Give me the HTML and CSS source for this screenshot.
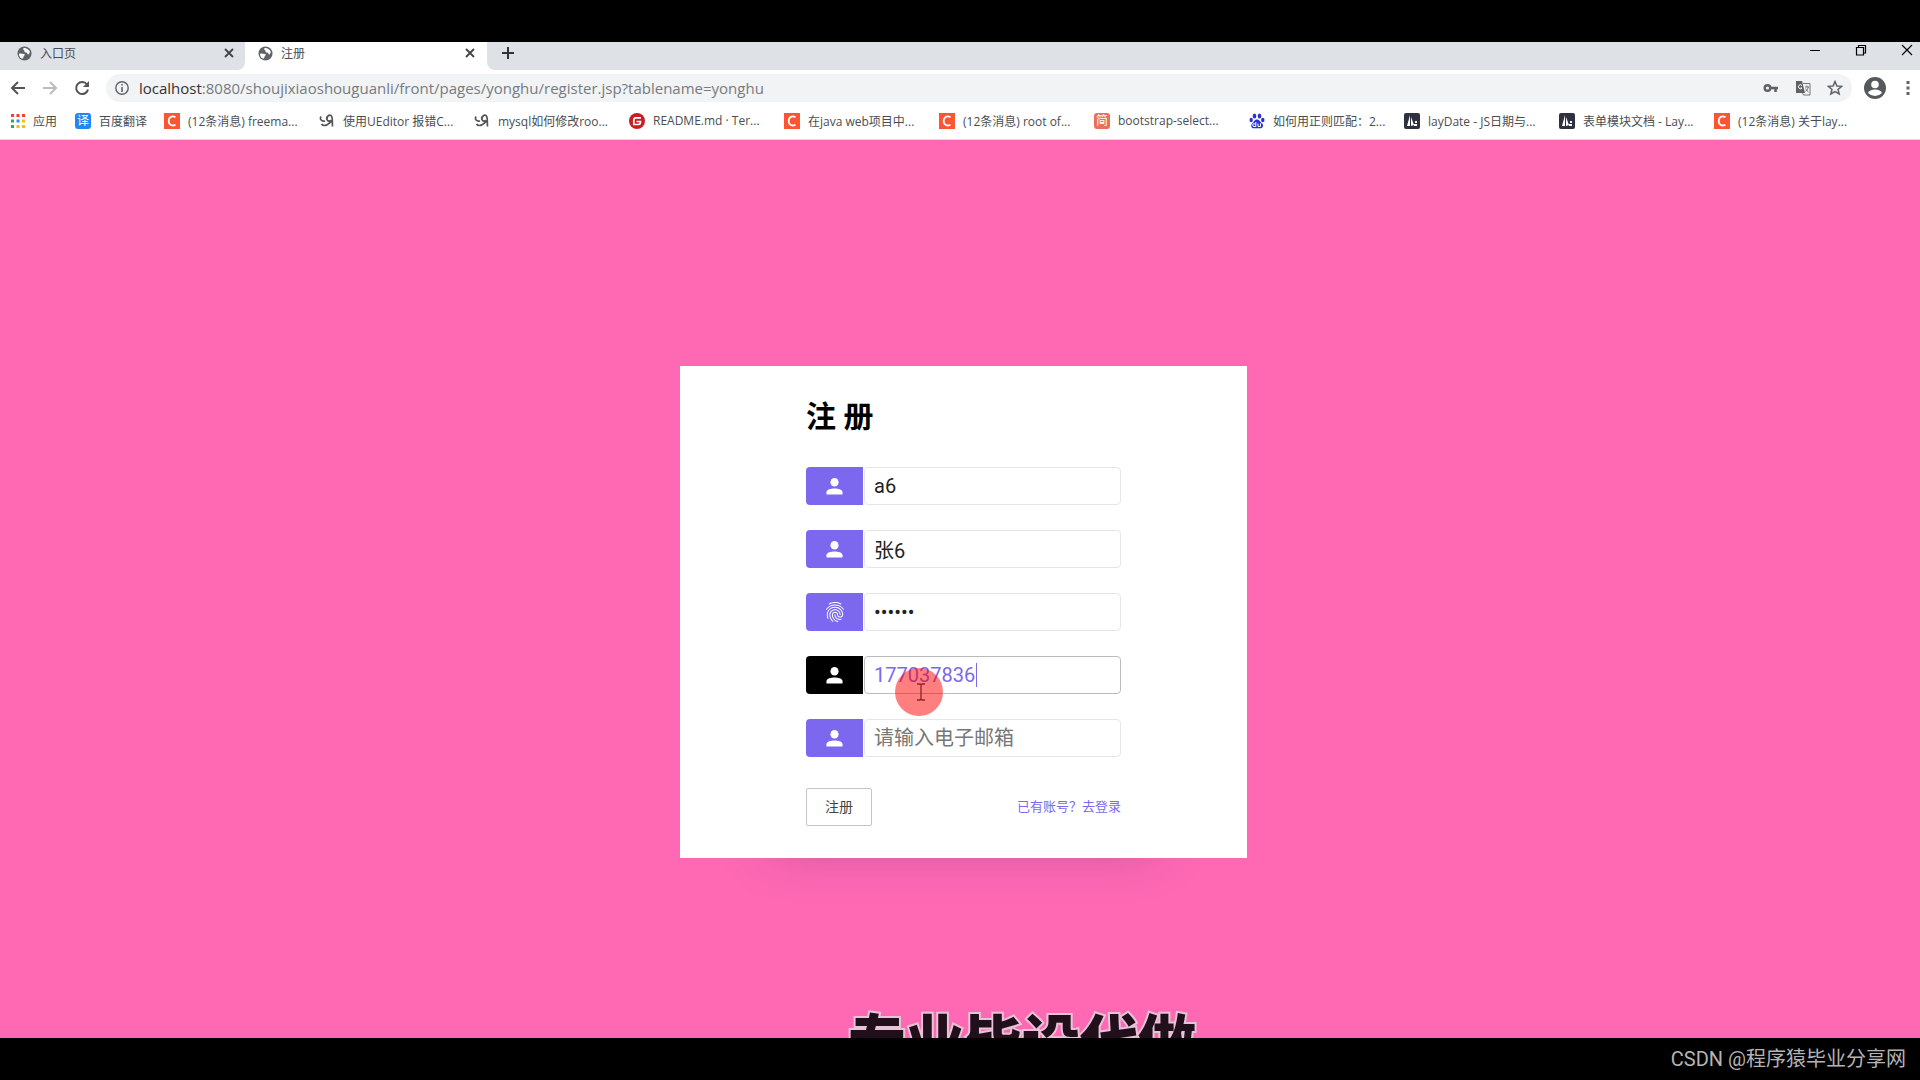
FILE: index.html
```html
<!DOCTYPE html>
<html lang="zh-CN">
<head>
  <meta charset="UTF-8" />
  <meta name="viewport" content="width=device-width, initial-scale=1" />
  <title>注册</title>
  <link rel="stylesheet" href="styles.css">
</head>
<body>
  <svg class="defs" width="0" height="0" aria-hidden="true">
    <symbol id="globe" viewBox="0 0 16 16">
      <circle cx="8" cy="8" r="7.5" fill="#5f6368"/>
      <path d="M2 8.500C4 7 6 9 8 8.500C9 9.500 7 10.500 7 11.500S6 13.500 5.500 13.700C3.500 12.800 2.200 11 2 8.500ZM8 2C10 2 12.500 3.500 13.500 5.500C13.800 7 13 8.500 12 9C10.500 9 11.500 7.500 10 7S8 7 8 5.500S6.500 4.500 6.500 3.500S7.300 2 8 2Z" fill="#fff"/>
    </symbol>
    <symbol id="person" viewBox="0 0 18 18">
      <ellipse cx="9" cy="4.500" rx="4.300" ry="4.500" fill="#fff"/>
      <path d="M0.500 17.500V15C0.500 12 5.500 11 9 11S17.500 12 17.500 15V17.500Z" fill="#fff"/>
    </symbol>
    <symbol id="csdn" viewBox="0 0 16 16">
      <path d="M0 0H16V16H0Z" fill="#fc5531"/>
      <path d="M11.500 4.200C8 2.200 4.700 4 4.700 8S8 13.500 11.500 11.700" fill="none" stroke="#fff" stroke-width="1.800"/>
    </symbol>
    <symbol id="ninja" viewBox="0 0 16 16">
      <path d="M2 3.500C0.500 6 2.500 9 6 8M8 3.500C7 7 9 9 12 7.500M8 6C8 3 10 1.500 12 2.500C14 4 13 8 13.500 13.500M13 7.500C11 9.500 9 12.500 5.500 12.500C4 12.500 3 11.800 2.500 11" fill="none" stroke="#555" stroke-width="1.700"/>
    </symbol>
    <symbol id="layui" viewBox="0 0 16 16">
      <rect width="16" height="16" rx="2" fill="#2f3140"/>
      <path d="M3 13L6 2V13ZM7 13V4L10 12ZM11 8H13V10H11ZM10 11H13V13H10Z" fill="#fff"/>
    </symbol>
  </svg>

  <header class="browser">
    <div class="tabs">
      <div class="tab">
        <svg class="favicon"><use href="#globe"/></svg>
        <span>入口页</span>
        <button class="icon-btn" aria-label="关闭"><svg width="10" height="10" viewBox="0 0 10 10"><path d="M1 1L9 9M9 1L1 9" stroke="#444" stroke-width="1.800"/></svg></button>
      </div>
      <div class="tab active">
        <svg class="favicon"><use href="#globe"/></svg>
        <span>注册</span>
        <button class="icon-btn" aria-label="关闭"><svg width="10" height="10" viewBox="0 0 10 10"><path d="M1 1L9 9M9 1L1 9" stroke="#444" stroke-width="1.800"/></svg></button>
      </div>
      <div class="tab-rest">
        <button class="icon-btn" aria-label="新标签页"><svg width="14" height="14" viewBox="0 0 14 14"><path d="M7 1V13M1 7H13" stroke="#333" stroke-width="2"/></svg></button>
        <div class="window-btns">
          <button class="icon-btn" aria-label="最小化"><svg width="12" height="12" viewBox="0 0 12 12"><path d="M1 6.500H11" stroke="#000"/></svg></button>
          <button class="icon-btn" aria-label="还原"><svg width="12" height="12" viewBox="0 0 12 12"><path d="M1.500 3.500H8.500V11H1.500ZM3.500 3.500V1.500H10.500V9H8.500" fill="none" stroke="#000" stroke-width="1.200"/></svg></button>
          <button class="icon-btn" aria-label="关闭窗口"><svg width="12" height="12" viewBox="0 0 12 12"><path d="M1 1L11 11M11 1L1 11" stroke="#000" stroke-width="1.200"/></svg></button>
        </div>
      </div>
    </div>

    <div class="toolbar">
      <button class="icon-btn" aria-label="后退"><svg width="16" height="16" viewBox="0 0 16 16"><path d="M15 8H2M8 2L2 8L8 14" fill="none" stroke="#555" stroke-width="2"/></svg></button>
      <button class="icon-btn" aria-label="前进"><svg width="16" height="16" viewBox="0 0 16 16"><path d="M1 8H14M8 2L14 8L8 14" fill="none" stroke="#bbb" stroke-width="2"/></svg></button>
      <button class="icon-btn" aria-label="刷新"><svg width="16" height="16" viewBox="0 0 16 16"><path d="M13 4.500A6 6 0 1 0 14 9.500" fill="none" stroke="#555" stroke-width="2"/><path d="M15 1V7H9Z" fill="#555"/></svg></button>
      <div class="address">
        <svg width="14" height="14" viewBox="0 0 14 14"><circle cx="7" cy="7" r="6.200" fill="none" stroke="#5f6368" stroke-width="1.400"/><path d="M7 6V11M7 3V4.600" stroke="#5f6368" stroke-width="1.600"/></svg>
        <div class="url"><span>localhost</span>:8080/shoujixiaoshouguanli/front/pages/yonghu/register.jsp?tablename=yonghu</div>
        <button class="icon-btn" aria-label="密码"><svg width="16" height="16" viewBox="0 0 16 16"><circle cx="4.500" cy="8" r="2.800" fill="none" stroke="#5f6368" stroke-width="2.400"/><path d="M7 8H15M12.500 8V12" fill="none" stroke="#5f6368" stroke-width="2.600"/></svg></button>
        <button class="icon-btn" aria-label="翻译"><svg width="16" height="16" viewBox="0 0 16 16"><path d="M1 1H7L10 13H1Z" fill="#5f6368"/><path d="M8 3.500H15V15H8.500L7.500 13" fill="none" stroke="#777"/><path d="M7 5.500A2 2 0 1 0 7 8H5.500" fill="none" stroke="#fff"/><path d="M10 7H14M12 5.500V7M13.500 7Q12.500 10 10.500 11.500M10.500 8.500Q12 11 13.500 12" fill="none" stroke="#777"/></svg></button>
        <button class="icon-btn" aria-label="收藏"><svg width="16" height="16" viewBox="0 0 16 16"><path d="M8 1.500L9.900 6 14.700 6.300 11 9.400 12.200 14 8 11.500 3.800 14 5 9.400 1.300 6.300 6.100 6Z" fill="none" stroke="#5f6368" stroke-width="1.500"/></svg></button>
      </div>
      <button class="icon-btn avatar" aria-label="用户"><svg width="22" height="22" viewBox="0 0 22 22"><circle cx="11" cy="11" r="11" fill="#55585d"/><circle cx="11" cy="7.500" r="3.800" fill="#fff"/><path d="M4 16Q5.500 12.500 11 12.500T18 16Q15 19 11 19T4 16Z" fill="#fff"/></svg></button>
      <button class="icon-btn" aria-label="菜单"><svg width="4" height="14" viewBox="0 0 4 14"><path d="M0.500 0H3.500V3H0.500ZM0.500 5.500H3.500V8.500H0.500ZM0.500 11H3.500V14H0.500Z" fill="#5f6368"/></svg></button>
    </div>

    <nav class="bookmarks">
      <a class="apps" href="#"><svg width="14" height="14" viewBox="0 0 14 14"><path d="M0 0H3V3H0ZM5.500 0H8.500V3H5.500ZM11 0H14V3H11Z" fill="#ea4335"/><path d="M0 5.500H3V8.500H0ZM0 11H3V14H0Z" fill="#34a853"/><path d="M5.500 5.500H8.500V8.500H5.500Z" fill="#4285f4"/><path d="M11 5.500H14V8.500H11ZM5.500 11H8.500V14H5.500ZM11 11H14V14H11Z" fill="#fbbc05"/></svg>应用</a>
      <a class="fanyi" href="#"><span class="mark mark-blue">译</span>百度翻译</a>
      <a href="#"><svg><use href="#csdn"/></svg>(12条消息) freema...</a>
      <a href="#"><svg><use href="#ninja"/></svg>使用UEditor 报错C...</a>
      <a href="#"><svg><use href="#ninja"/></svg>mysql如何修改roo...</a>
      <a href="#"><svg viewBox="0 0 16 16"><circle cx="8" cy="8" r="8" fill="#c71d23"/><path d="M12 4.800H7Q4.800 4.800 4.800 7V11.500H9.500Q11.500 11.500 11.500 8.500H7.500" fill="none" stroke="#fff" stroke-width="1.700"/></svg>README.md · Ter...</a>
      <a href="#"><svg><use href="#csdn"/></svg>在java web项目中...</a>
      <a href="#"><svg><use href="#csdn"/></svg>(12条消息) root of...</a>
      <a href="#"><span class="mark mark-red">简</span>bootstrap-select...</a>
      <a href="#"><svg viewBox="0 0 16 16"><g fill="#2b32d8"><ellipse cx="5.500" cy="3" rx="1.800" ry="2.500"/><ellipse cx="10.500" cy="3" rx="1.800" ry="2.500"/><ellipse cx="2.200" cy="7" rx="1.700" ry="2.200"/><ellipse cx="13.800" cy="7" rx="1.700" ry="2.200"/><path d="M8 6.500C10.500 6.500 11 9 13 10.500S14 15.500 11 15.300H5C2 15.500 1.500 12 3.200 10.500S5.500 6.500 8 6.500Z"/></g><path d="M6.800 9V13.500H5A1.300 1.300 0 0 1 5 10.800H6.800M9 10.500V13.500H11.500V10.500" fill="none" stroke="#fff"/></svg>如何用正则匹配：2...</a>
      <a href="#"><svg><use href="#layui"/></svg>layDate - JS日期与...</a>
      <a href="#"><svg><use href="#layui"/></svg>表单模块文档 - Lay...</a>
      <a href="#"><svg><use href="#csdn"/></svg>(12条消息) 关于lay...</a>
    </nav>
  </header>

  <main class="page">
    <form class="card">
      <h1>注 册</h1>
      <div class="field">
        <label for="account"><svg class="person"><use href="#person"/></svg></label>
        <input type="text" id="account" value="a6" aria-label="账号" />
      </div>
      <div class="field">
        <label for="fullname"><svg class="person"><use href="#person"/></svg></label>
        <input type="text" id="fullname" value="张6" aria-label="姓名" />
      </div>
      <div class="field">
        <label for="password"><svg class="finger" viewBox="2 2 20 20"><path fill="#fff" d="M17.810 4.470c-.08 0-.16-.02-.23-.06C15.660 3.420 14 3 12.010 3c-1.980 0-3.860.47-5.570 1.410-.24.13-.54.04-.68-.2-.13-.24-.04-.55.2-.68C7.820 2.520 9.860 2 12.010 2c2.130 0 3.990.47 6.030 1.520.25.13.34.43.21.67-.09.18-.26.28-.44.28zM3.500 9.720c-.1 0-.2-.03-.29-.09-.23-.16-.28-.47-.12-.7.99-1.400 2.250-2.500 3.750-3.270C9.980 4.040 14 4.030 17.150 5.650c1.500.77 2.760 1.860 3.750 3.250.16.22.11.54-.12.7-.23.16-.54.11-.7-.12-.9-1.260-2.040-2.250-3.390-2.940-2.870-1.470-6.540-1.470-9.400.01-1.360.7-2.500 1.700-3.400 2.960-.08.14-.23.21-.39.21zm6.250 12.070c-.13 0-.26-.05-.35-.15-.87-.87-1.340-1.430-2.010-2.640-.69-1.230-1.050-2.730-1.050-4.340 0-2.970 2.540-5.390 5.660-5.390s5.660 2.420 5.660 5.390c0 .28-.22.5-.5.5s-.5-.22-.5-.5c0-2.420-2.090-4.390-4.660-4.390-2.570 0-4.660 1.970-4.660 4.390 0 1.440.32 2.770.93 3.850.64 1.150 1.080 1.640 1.850 2.420.19.2.19.51 0 .71-.11.1-.24.15-.37.15zm7.170-1.850c-1.190 0-2.240-.3-3.100-.89-1.490-1.010-2.380-2.650-2.380-4.390 0-.28.22-.5.5-.5s.5.22.5.5c0 1.410.72 2.740 1.940 3.560.71.48 1.540.71 2.540.71.24 0 .64-.03 1.040-.1.27-.05.53.13.58.41.05.27-.13.53-.41.58-.57.11-1.070.12-1.210.12zM14.910 22c-.04 0-.09-.01-.13-.02-1.590-.44-2.630-1.030-3.720-2.100-1.400-1.390-2.170-3.240-2.170-5.220 0-1.620 1.380-2.940 3.080-2.940 1.700 0 3.080 1.320 3.080 2.940 0 1.070.93 1.940 2.080 1.940s2.080-.87 2.080-1.940c0-3.770-3.250-6.830-7.250-6.830-2.840 0-5.440 1.580-6.610 4.030-.39.81-.59 1.760-.59 2.800 0 .78.07 2.010.67 3.610.1.26-.03.55-.29.64-.26.1-.55-.04-.64-.29-.49-1.310-.73-2.610-.73-3.960 0-1.200.23-2.290.68-3.240 1.330-2.790 4.280-4.600 7.510-4.600 4.550 0 8.250 3.510 8.250 7.830 0 1.620-1.380 2.940-3.080 2.940s-3.080-1.320-3.080-2.940c0-1.070-.93-1.940-2.080-1.940s-2.080.87-2.080 1.940c0 1.710.66 3.310 1.870 4.510.95.94 1.860 1.460 3.270 1.850.27.07.42.35.35.61-.05.23-.26.38-.47.38z"/></svg></label>
        <input type="password" id="password" value="123456" aria-label="密码" />
      </div>
      <div class="field current">
        <label for="phone"><svg class="person"><use href="#person"/></svg></label>
        <input type="text" id="phone" value="177037836" aria-label="手机" />
        <span class="caret"></span>
        <span class="pointer"><svg width="10" height="18" viewBox="0 0 10 18"><path d="M1 1H4L5 2L6 1H9M5 2V16M1 17H4L5 16L6 17H9" fill="none" stroke="#8c2626" stroke-width="1.300"/></svg></span>
      </div>
      <div class="field">
        <label for="email"><svg class="person"><use href="#person"/></svg></label>
        <input type="text" id="email" placeholder="请输入电子邮箱" aria-label="电子邮箱" />
      </div>
      <div class="actions">
        <button type="submit">注册</button>
        <a href="#">已有账号？去登录</a>
      </div>
    </form>
    <p class="caption">专业毕设代做</p>
  </main>

  <footer class="watermark">CSDN @程序猿毕业分享网</footer>
</body>
</html>
```

FILE: styles.css
```css
* {
  box-sizing: border-box;
}
body {
  margin: 0;
  padding-top: 42px;
  min-height: 100vh;
  display: flex;
  flex-direction: column;
  background: #000;
  font-family: "Open Sans", "Noto Sans CJK SC", sans-serif;
}
.defs {
  position: absolute;
}
.icon-btn {
  display: flex;
  padding: 0;
  border: none;
  background: none;
  cursor: pointer;
}

/* tabs */
.browser {
  background: #fff;
  color: #4a4d51;
  font-size: 12px;
}
.tabs {
  display: flex;
  height: 28px;
}
.tab {
  flex: 0 0 245px;
  display: flex;
  align-items: center;
  gap: 8px;
  padding: 0 11px 6px 17px;
  background: #dee1e6;
  border-radius: 0 0 8px 0;
}
.tab.active {
  flex-basis: 242px;
  padding: 0 12px 6px 13px;
  background: #fff;
}
.tab span {
  flex: 1;
}
.favicon {
  width: 15px;
  height: 15px;
}
.tab-rest {
  flex: 1;
  display: flex;
  justify-content: space-between;
  align-items: center;
  padding: 0 7px 6px 14px;
  background: #dee1e6;
  border-radius: 0 0 0 8px;
}
.window-btns {
  display: flex;
  gap: 34px;
  padding-bottom: 6px;
}

/* toolbar */
.toolbar {
  display: flex;
  align-items: center;
  height: 36px;
  padding: 0 10px;
  gap: 16px;
}
.address {
  flex: 1;
  display: flex;
  align-items: center;
  gap: 16px;
  height: 28px;
  padding: 0 9px;
  border-radius: 14px;
  background: #f1f3f4;
}
.url {
  flex: 1;
  margin-left: -6px;
  font-size: 15px;
  line-height: 28px;
  color: #777b80;
}
.url span {
  color: #333;
}
.avatar {
  margin: 0 4px 0 -4px;
}

/* bookmarks */
.bookmarks {
  display: flex;
  align-items: center;
  height: 34px;
  padding: 0 11px 4px;
  border-bottom: 1px solid #d9dadd;
}
.bookmarks a {
  flex: 0 1 155px;
  display: flex;
  align-items: center;
  gap: 8px;
  color: #4a4d51;
  text-decoration: none;
  white-space: nowrap;
}
.bookmarks a.apps {
  flex-basis: 64px;
}
.bookmarks a.fanyi {
  flex-basis: 89px;
}
.bookmarks a > svg {
  flex: none;
  width: 16px;
  height: 16px;
}
.bookmarks a.apps > svg {
  width: 14px;
  height: 14px;
}
.mark {
  width: 16px;
  border-radius: 3px;
  color: #fff;
  line-height: 16px;
  text-align: center;
}
.mark-blue {
  background: #2287f5;
}
.mark-red {
  background: #ea6f5a;
}

/* register page */
.page {
  position: relative;
  flex: 1;
  display: flex;
  justify-content: center;
  align-items: flex-start;
  padding: 226px 0 100px 7px;
  background: #ff69b4;
  overflow: hidden;
}
.card {
  width: 567px;
  padding: 24px 126px 32px;
  background: #fff;
  box-shadow: 0 80px 50px -90px rgba(60, 30, 90, 0.3);
}
.card h1 {
  margin: 0 0 24px;
  font: bold 30px/53px Roboto, "Noto Sans CJK SC", sans-serif;
  color: #000;
}
.field {
  position: relative;
  display: flex;
  gap: 1px;
  height: 38px;
  margin-bottom: 25px;
}
.field label {
  flex: 0 0 57px;
  display: flex;
  justify-content: center;
  align-items: center;
  border-radius: 4px 0 0 4px;
  background: #7b68ee;
}
.field input {
  flex: 1;
  min-width: 0;
  padding: 0 9px;
  border: 1px solid #e6e6e6;
  border-radius: 4px;
  background: #fff;
  color: #222;
  font: 20px Roboto, "Noto Sans CJK SC", sans-serif;
}
.field input::placeholder {
  color: #777;
}
.person {
  width: 17px;
  height: 17px;
}
.finger {
  width: 20px;
  height: 22px;
}
.current label {
  background: #000;
}
.field.current input {
  border-color: #bbb;
  color: #7b68ee;
}
.caret {
  position: absolute;
  left: 170px;
  top: 7px;
  width: 1px;
  height: 24px;
  background: #7b68ee;
}
.pointer {
  position: absolute;
  left: 89px;
  top: 12px;
  display: flex;
  justify-content: center;
  align-items: center;
  width: 48px;
  height: 48px;
  padding-left: 4px;
  border-radius: 50%;
  background: rgba(255, 0, 0, 0.5);
}
.actions {
  display: flex;
  justify-content: space-between;
  align-items: center;
  margin-top: 31px;
}
.actions button {
  padding: 0 18px;
  border: 1px solid #c4c4c4;
  border-radius: 2px;
  background: #fff;
  color: #444;
  font: 14px/36px Roboto, "Noto Sans CJK SC", sans-serif;
}
.actions a {
  color: #7b68ee;
  font: 13px/36px Roboto, "Noto Sans CJK SC", sans-serif;
  text-decoration: none;
}

/* subtitle laid over the page, cut off by the bottom edge */
.caption {
  position: absolute;
  left: 848px;
  bottom: -36px;
  margin: 0;
  color: #21101c;
  font: 900 58px/72px "Noto Sans CJK SC", sans-serif;
  -webkit-text-stroke: 4px #e6c3d6;
  paint-order: stroke fill;
}
.watermark {
  padding-right: 14px;
  color: #b4b4b4;
  font: 20px/42px Roboto, "Noto Sans CJK SC", sans-serif;
  text-align: right;
}
```
